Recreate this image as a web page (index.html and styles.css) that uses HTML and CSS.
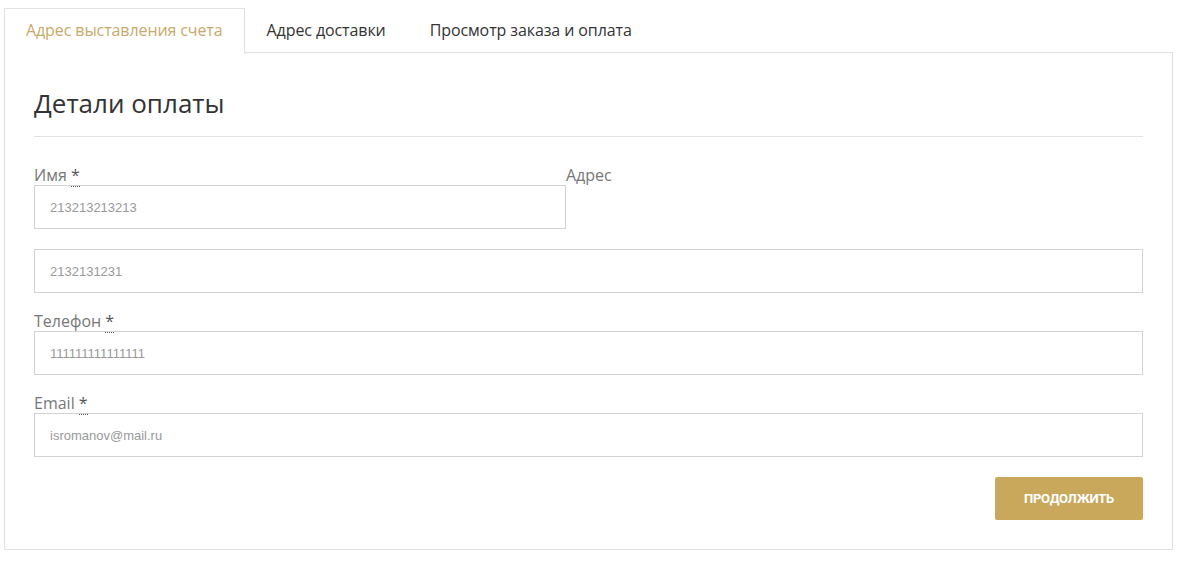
FILE: index.html
```html
<!DOCTYPE html>
<html lang="ru">
<head>
    <meta charset="UTF-8">
    <meta name="viewport" content="width=device-width, initial-scale=1.0">
    <title>Оформление заказа</title>
    <link rel="stylesheet" href="styles.css">
</head>
<body>

<div class="checkout">
    <!-- Вкладки -->
    <ul class="tabs">
        <li class="tab active">Адрес выставления счета</li>
        <li class="tab">Адрес доставки</li>
        <li class="tab">Просмотр заказа и оплата</li>
    </ul>

    <div class="panel">
        <h2 class="titulo">Детали оплаты</h2>

        <div class="linha">
            <div class="campo metade">
                <label>Имя <abbr title="обязательно">*</abbr></label>
                <input type="text" value="213213213213">
            </div>
            <div class="campo metade">
                <label>Адрес</label>
            </div>
        </div>

        <div class="campo">
            <input type="text" value="2132131231">
        </div>

        <div class="campo">
            <label>Телефон <abbr title="обязательно">*</abbr></label>
            <input type="tel" value="111111111111111">
        </div>

        <div class="campo">
            <label>Email <abbr title="обязательно">*</abbr></label>
            <input type="email" value="isromanov@mail.ru">
        </div>

        <div class="acoes">
            <button type="button" class="botao">Продолжить</button>
        </div>
    </div>
</div>

</body>
</html>
```

FILE: styles.css
```css
/* Estilos gerais */
body {
    margin: 0;
    background: #fff;
    font-family: "Open Sans", sans-serif;
    color: #333;
}
.checkout {
    padding: 8px 26px 0 4px;
}
/* Abas */
.tabs {
    list-style: none;
    margin: 0;
    padding: 0;
    display: flex;
    height: 44px;
}
.tab {
    padding: 0 21px;
    font-size: 16px;
    letter-spacing: -0.1px;
    line-height: 43px;
    color: #333;
    border: 1px solid transparent;
    border-bottom: none;
}
.tab.active {
    color: #c8a96a; /* dourado */
    border-color: #e1e1e1;
    background: #fff;
    position: relative;
    z-index: 1;
    height: 45px;
}
.panel {
    border: 1px solid #e1e1e1;
    padding: 34px 29px 29px;
}
.titulo {
    font-size: 26px;
    font-weight: 400;
    margin: 0;
    padding-bottom: 17px;
    line-height: 32px;
    color: #333;
    border-bottom: 1px solid #e3e3e3;
}
/* Formulário */
.linha {
    display: flex;
    margin-top: 30px;
}
.metade {
    width: 532px;
}
.campo {
    margin-bottom: 20px;
}
.campo label {
    display: block;
    font-size: 16px;
    line-height: 16px;
    color: #777;
    margin-bottom: 2px;
}
.campo abbr {
    text-decoration: none;
    border-bottom: 1px dotted #555;
    color: #555;
}
.campo input {
    display: block;
    width: 100%;
    height: 44px;
    box-sizing: border-box;
    border: 1px solid #d3d3d3;
    padding: 0 15px;
    font-family: "Liberation Sans", Arial, sans-serif;
    font-size: 13px;
    color: #999;
    background: #fff;
}
.acoes {
    display: flex;
    justify-content: flex-end;
}
.botao {
    width: 148px;
    height: 43px;
    border: none;
    border-radius: 2px;
    background-color: #c9a85c;
    color: #fff;
    font-family: Roboto, "Liberation Sans", sans-serif;
    font-weight: 700;
    font-size: 13px;
    text-transform: uppercase;
    letter-spacing: -0.2px;
    cursor: pointer;
}
```
